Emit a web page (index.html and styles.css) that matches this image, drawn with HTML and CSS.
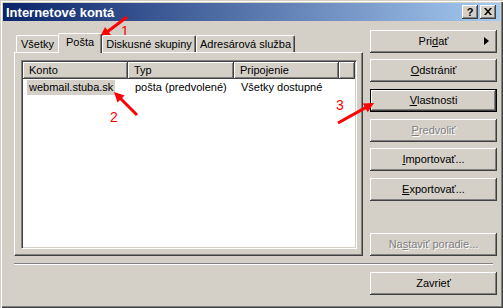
FILE: index.html
```html
<!DOCTYPE html>
<html>
<head>
<meta charset="utf-8">
<link rel="stylesheet" href="styles.css">
</head>
<body>
<div class="win">
  <div class="titlebar">
    <span class="title">Internetové kontá</span>
    <div class="tb-btns">
      <span class="tbb">?</span>
      <span class="tbb tbx">
        <svg width="8" height="7" viewBox="0 0 8 7"><path d="M0 0h2l2 2.5L6 0h2L5 3.5 8 7H6L4 4.5 2 7H0l3-3.5z" fill="#000"/></svg>
      </span>
    </div>
  </div>
  <div class="body">
    <div class="main">
      <div class="left">
        <div class="tabs">
          <div class="tab t1">Všetky</div>
          <div class="tab t2 sel">Pošta</div>
          <div class="tab t3">Diskusné skupiny</div>
          <div class="tab t4">Adresárová služba</div>
        </div>
        <div class="panel">
          <div class="list">
            <div class="hdr">
              <div class="hc c1">Konto</div>
              <div class="hc c2">Typ</div>
              <div class="hc c3">Pripojenie</div>
              <div class="hc c4"></div>
            </div>
            <div class="row">
              <div class="cell c1"><span class="hl">webmail.stuba.sk</span></div>
              <div class="cell c2">pošta (predvolené)</div>
              <div class="cell c3">Všetky dostupné</div>
            </div>
          </div>
        </div>
      </div>
      <div class="btns">
        <div class="btn b-add">Pri<u>d</u>ať<span class="tri"></span></div>
        <div class="btn g6"><u>O</u>dstrániť</div>
        <div class="btn def g7"><u>V</u>lastnosti</div>
        <div class="btn dis g7"><u>P</u>redvoliť</div>
        <div class="btn g6"><u>I</u>mportovať...</div>
        <div class="btn g7"><u>E</u>xportovať...</div>
        <div class="btn dis last">Na<u>s</u>taviť poradie...</div>
      </div>
    </div>
    <div class="sep"></div>
    <div class="bottom">
      <div class="btn">Zavrieť</div>
    </div>
  </div>
  <svg class="annot" width="503" height="308" viewBox="0 0 503 308">
    <g fill="#ff0000" stroke="none">
      <line x1="127" y1="17" x2="107" y2="32" stroke="#ff0000" stroke-width="3"/>
      <polygon points="100,37 111,35.1 105,27"/>
      <line x1="137" y1="115" x2="120" y2="98" stroke="#ff0000" stroke-width="3"/>
      <polygon points="114,92 124.6,95.5 117.5,102.6"/>
      <line x1="338" y1="123" x2="366" y2="107.4" stroke="#ff0000" stroke-width="3"/>
      <polygon points="374,103 367.7,112.2 362.8,103.5"/>
      <text x="121" y="36" class="num">1</text>
      <text x="110" y="122" class="num">2</text>
      <text x="336" y="110" class="num">3</text>
    </g>
  </svg>
</div>
</body>
</html>
```
FILE: styles.css
```css
* { box-sizing: border-box; }
html, body { margin: 0; padding: 0; background: #d4d0c8; }
body {
  font-family: "Liberation Sans", Arial, sans-serif;
  font-size: 11px;
  color: #000;
}
.win {
  position: relative;
  width: 503px;
  height: 308px;
  background: #d4d0c8;
  padding: 3px;
  box-shadow: inset 1px 1px #d4d0c8, inset 2px 2px #fff, inset -1px -1px #404040, inset -2px -2px #808080;
  display: flex;
  flex-direction: column;
}
.titlebar {
  height: 18px;
  background: linear-gradient(to right, #0a246a, #a6caf0);
  display: flex;
  align-items: center;
  justify-content: space-between;
  padding: 0 4px 0 3px;
}
.title {
  color: #fff;
  font-weight: bold;
  font-size: 13px;
}
.tb-btns { display: flex; gap: 2px; }
.tbb {
  width: 16px;
  height: 14px;
  background: #d4d0c8;
  box-shadow: inset -1px -1px #404040, inset 1px 1px #fff, inset -2px -2px #808080;
  display: flex;
  align-items: center;
  justify-content: center;
  font-weight: bold;
  font-size: 11px;
  line-height: 14px;
  padding-bottom: 1px;
}
.body {
  flex: 1;
  display: flex;
  flex-direction: column;
  padding: 9px 3px 0 11px;
}
.main {
  display: flex;
  height: 226px;
}
.left {
  width: 350px;
  display: flex;
  flex-direction: column;
}
.tabs {
  margin-top: 3px;
  height: 19px;
  display: flex;
  align-items: flex-end;
  padding-left: 2px;
  position: relative;
  z-index: 1;
}
.tab {
  height: 17px;
  background: #d4d0c8;
  border-top: 1px solid #fff;
  border-left: 1px solid #fff;
  border-top-left-radius: 2px;
  border-top-right-radius: 2px;
  box-shadow: inset -1px 0 #808080;
  border-right: 1px solid #404040;
  text-align: center;
  line-height: 16px;
}
.t1 { width: 42px; border-right: none; box-shadow: none; }
.t2 { width: 44px; }
.t3 { width: 94px; }
.t4 { width: 99px; }
.tab.sel {
  height: 20px;
  margin-bottom: -1px;
  line-height: 17px;
}
.panel {
  flex: 1;
  padding: 7px 5px 6px 6px;
  border-top: 1px solid #fff;
  border-left: 1px solid #fff;
  border-right: 1px solid #404040;
  border-bottom: 1px solid #404040;
  box-shadow: inset -1px -1px #808080;
}
.list {
  height: 100%;
  background: #fff;
  border-top: 1px solid #808080;
  border-left: 1px solid #808080;
  border-right: 1px solid #fff;
  border-bottom: 1px solid #fff;
  box-shadow: inset 1px 1px #404040, inset -1px -1px #d4d0c8;
  padding: 1px;
}
.hdr {
  display: flex;
  height: 17px;
}
.hc {
  background: #d4d0c8;
  box-shadow: inset -1px -1px #404040, inset 1px 1px #fff, inset -2px -2px #808080;
  line-height: 16px;
  padding-left: 6px;
}
.c1 { width: 105px; }
.c2 { width: 106px; }
.c3 { width: 105px; }
.c4 { flex: 1; }
.row {
  display: flex;
  height: 16px;
  margin-top: 1px;
  line-height: 14px;
}
.cell { padding-left: 7px; }
.cell.c1 { padding-left: 4px; }
.hl {
  background: #d4d0c8;
  padding: 1px 2px 1px 2px;
  display: inline-block;
  line-height: 13px;
}
.btns {
  margin-left: 7px;
  width: 127px;
  display: flex;
  flex-direction: column;
}
.btn {
  position: relative;
  height: 23px;
  width: 127px;
  background: #d4d0c8;
  box-shadow: inset -1px -1px #404040, inset 1px 1px #fff, inset -2px -2px #808080;
  display: flex;
  align-items: center;
  justify-content: center;
  padding-bottom: 1px;
}
.btn u { text-decoration: underline; text-underline-offset: 1px; }
.g6 { margin-top: 6px; }
.g7 { margin-top: 7px; }
.btn.def {
  border: 1px solid #000;
  box-shadow: inset -1px -1px #404040, inset 1px 1px #fff, inset -2px -2px #808080;
}
.btn.dis {
  color: #808080;
  text-shadow: 1px 1px #fff;
}
.btn.last { margin-top: auto; }
.tri {
  position: absolute;
  right: 8px;
  top: 7px;
  width: 0;
  height: 0;
  border-top: 4px solid transparent;
  border-bottom: 4px solid transparent;
  border-left: 5px solid #000;
}
.sep {
  margin-top: 7px;
  width: 479px;
  height: 2px;
  border-top: 1px solid #808080;
  border-bottom: 1px solid #fff;
}
.bottom {
  margin-top: 7px;
  display: flex;
  justify-content: flex-end;
}
.annot {
  position: absolute;
  left: 0;
  top: 0;
  pointer-events: none;
}
.num {
  font-family: "Liberation Sans", Arial, sans-serif;
  font-size: 14px;
}
```
